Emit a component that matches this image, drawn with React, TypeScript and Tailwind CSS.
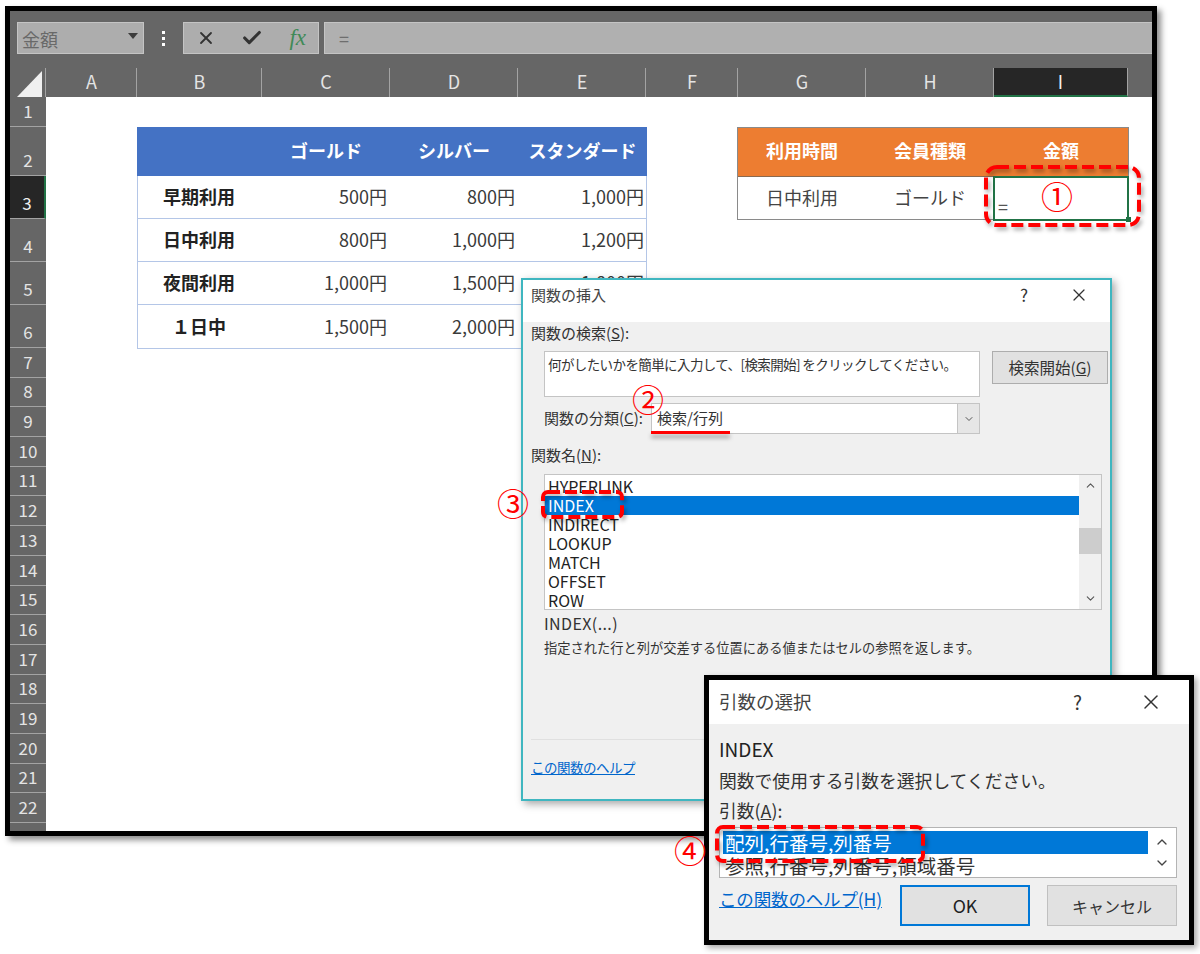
import { Check, ChevronDown, ChevronUp, X } from 'lucide-react';

const font = "font-['Noto_Sans_CJK_JP','Noto_Sans',sans-serif]";

const columns = [
  { name: 'A', width: 'w-[91px]' },
  { name: 'B', width: 'w-[125px]' },
  { name: 'C', width: 'w-[128px]' },
  { name: 'D', width: 'w-[128px]' },
  { name: 'E', width: 'w-[128px]' },
  { name: 'F', width: 'w-[92px]' },
  { name: 'G', width: 'w-[128px]' },
  { name: 'H', width: 'w-[128px]' },
];

const rowHeights: [string, string][] = [
  ['1', 'h-[30px]'],
  ['2', 'h-[49px]'],
  ['3', 'h-[43px]'],
  ['4', 'h-[43px]'],
  ['5', 'h-[43px]'],
  ['6', 'h-[43px]'],
];
const plainRows = ['7', '8', '9', '10', '11', '12', '13', '14', '15', '16', '17', '18', '19', '20', '21', '22'];

const prices = [
  ['早期利用', '500円', '800円', '1,000円'],
  ['日中利用', '800円', '1,000円', '1,200円'],
  ['夜間利用', '1,000円', '1,500円', '1,800円'],
  ['１日中', '1,500円', '2,000円', '2,500円'],
];

const functions = ['HYPERLINK', 'INDEX', 'INDIRECT', 'LOOKUP', 'MATCH', 'OFFSET', 'ROW'];

function RowHead({ label, height, active }: { label: string; height: string; active?: boolean }) {
  return (
    <div
      className={`${height} flex shrink-0 items-end justify-center border-b border-[#a3a3a3] pb-[4px] text-[17px] leading-[22px] ${
        active ? 'border-r-2 border-r-[#217346] bg-[#262626] text-[#f0f0f0]' : 'text-[#e4e4e4]'
      }`}
    >
      {label}
    </div>
  );
}

function Toolbar() {
  return (
    <div className="flex h-[57px] shrink-0 items-start bg-[#666666] pt-[11px] pl-[7px]">
      <div className="flex h-[32px] w-[127px] items-center justify-between border border-[#c4c4c4] bg-[#adadad] pr-[5px] pl-[4px] text-[18px] text-[#696969]">
        <span className="mt-[2px]">金額</span>
        <svg width="10" height="6" viewBox="0 0 10 6" className="mb-1">
          <path d="M0 0h10L5 6z" fill="#3c3c3c" />
        </svg>
      </div>
      <div className="flex w-[39px] justify-center pt-[9px]">
        <div className="flex flex-col gap-[3px]">
          <span className="size-[3px] bg-white" />
          <span className="size-[3px] bg-white" />
          <span className="size-[3px] bg-white" />
        </div>
      </div>
      <div className="flex h-[32px] w-[136px] items-center justify-between border border-[#c4c4c4] bg-[#adadad] pr-[12px] pl-[12px]">
        <X size={20} strokeWidth={2.2} className="text-[#333333]" />
        <Check size={22} strokeWidth={3.4} className="-ml-[2px] text-[#333333]" />
        <span className="font-['Liberation_Serif',serif] text-[23px] text-[#3f8a57] italic">fx</span>
      </div>
      <div className="ml-[5px] flex h-[32px] flex-1 items-center border-t border-b border-l border-[#c4c4c4] bg-[#b0b0b0] pl-[14px] text-[18px] text-[#6e6e6e]">
        =
      </div>
    </div>
  );
}

function ColumnHeader() {
  return (
    <div className="flex h-[29px] shrink-0 bg-[#666666]">
      <div className="flex w-[36px] shrink-0 items-end justify-end border-r border-[#a3a3a3] pr-[2px]">
        <svg width="26" height="26" viewBox="0 0 26 26">
          <path d="M25 0v26H0z" fill="#f0f0f0" />
        </svg>
      </div>
      {columns.map((col) => (
        <div
          key={col.name}
          className={`${col.width} flex shrink-0 items-center justify-center border-r border-[#a3a3a3] pb-[2px] pl-[1px] text-[18px] text-[#e4e4e4]`}
        >
          {col.name}
        </div>
      ))}
      <div className="flex w-[134px] shrink-0 items-center justify-center border-r border-[#a3a3a3] border-b-2 border-b-[#217346] bg-[#262626] pb-[1px] text-[18px] text-[#f0f0f0]">
        I
      </div>
    </div>
  );
}

function PriceTable() {
  return (
    <div className="w-[510px] shrink-0 border-r border-b border-l border-[#b4c6e7] text-[18px] text-[#3a3a3a]">
      <div className="-mx-px grid h-[49px] grid-cols-[125px_128px_128px_129px] items-center bg-[#4472c4] pb-[3px] font-bold text-white">
        <span />
        <span className="text-center">ゴールド</span>
        <span className="text-center">シルバー</span>
        <span className="text-center">スタンダード</span>
      </div>
      {prices.map((row, i) => (
        <div
          key={row[0]}
          className={`grid h-[43px] grid-cols-[125px_128px_128px_128px] items-center pb-[1px] ${
            i < prices.length - 1 ? 'border-b border-[#b4c6e7]' : ''
          }`}
        >
          <span className="pr-[3px] text-center font-bold text-[#222222]">{row[0]}</span>
          <span className="pr-[4px] text-right">{row[1]}</span>
          <span className="pr-[4px] text-right">{row[2]}</span>
          <span className="pr-[3px] text-right">{row[3]}</span>
        </div>
      ))}
    </div>
  );
}

function LookupTable() {
  return (
    <div className="ml-[90px] w-[392px] shrink-0 border border-[#8a8a8a] text-[18px] text-[#444444]">
      <div className="grid h-[49px] grid-cols-[128px_128px_134px] items-center border-b border-[#8a6a50] bg-[#ed7d31] pb-[3px] text-center font-bold text-white">
        <span>利用時間</span>
        <span>会員種類</span>
        <span>金額</span>
      </div>
      <div className="grid h-[42px] grid-cols-[128px_128px_134px] items-center pb-[1px] text-center">
        <span>日中利用</span>
        <span>ゴールド</span>
        <span className="self-end pb-[2px] pl-[4px] text-left text-[18px] leading-[20px] text-[#555555]">=</span>
      </div>
    </div>
  );
}

function InsertFunctionDialog() {
  return (
    <div className="absolute top-[278px] left-[521px] flex h-[523px] w-[591px] flex-col border-2 border-[#3fb6c0] bg-[#f0f0f0] text-[15px] text-[#333333] shadow-[3px_3px_8px_rgba(0,0,0,0.35)]">
      <div className="flex h-[42px] shrink-0 items-start justify-between bg-white pt-[4px] pr-[21px] pl-[8px] leading-[22px]">
        <span className="text-[#444444]">関数の挿入</span>
        <div className="flex items-center gap-[41px]">
          <span className="text-[17px]">?</span>
          <X size={20} strokeWidth={1.5} />
        </div>
      </div>
      <div className="px-[8px]">
        <div className="h-[29px] leading-[22px]">
          関数の検索(<u>S</u>):
        </div>
        <div className="flex items-start">
          <div className="ml-[13px] h-[46px] w-[436px] shrink-0 border border-[#c4c4c4] bg-white pt-[2px] pl-[3px] text-[13.5px] leading-[20px] tracking-[-0.6px] whitespace-nowrap">
            何がしたいかを簡単に入力して、[検索開始] をクリックしてください。
          </div>
          <div className="ml-[12px] flex h-[33px] w-[116px] shrink-0 items-center justify-center border border-[#adadad] bg-[#e1e1e1] text-[15.5px]">
            検索開始(<u>G</u>)
          </div>
        </div>
        <div className="mt-[6px] flex h-[31px] items-center pl-[13px]">
          <span className="w-[107px] whitespace-nowrap">
            関数の分類(<u>C</u>):
          </span>
          <div className="flex h-[31px] w-[329px] items-center justify-between border border-[#c4c4c4] bg-white pl-[5px]">
            検索/行列
            <span className="flex h-full w-[22px] items-center justify-center border-l border-[#c4c4c4] bg-[#e6e6e6]">
              <ChevronDown size={12} className="text-[#555555]" />
            </span>
          </div>
        </div>
        <div className="mt-[7px] h-[33px] leading-[28px]">
          関数名(<u>N</u>):
        </div>
        <div className="ml-[13px] flex h-[136px] w-[558px] border border-[#c4c4c4] bg-white">
          <div className="w-[534px] pt-[2px] text-[16px] leading-[19px] text-[#222222]">
            {functions.map((fn) => (
              <div key={fn} className={`h-[19px] pl-[3px] ${fn === 'INDEX' ? 'bg-[#0078d7] text-white' : ''}`}>
                {fn}
              </div>
            ))}
          </div>
          <div className="flex flex-1 flex-col items-center justify-between bg-[#f0f0f0] py-[4px]">
            <ChevronUp size={13} className="text-[#555555]" />
            <div className="mb-[3px] h-[26px] w-full bg-[#cdcdcd]" />
            <ChevronDown size={13} className="text-[#555555]" />
          </div>
        </div>
        <div className="mt-[2px] ml-[13px] h-[22px] text-[16px] leading-[22px] tracking-[0.4px]">INDEX(...)</div>
        <div className="mt-[4px] ml-[13px] text-[13.25px] leading-[20px] whitespace-nowrap">
          指定された行と列が交差する位置にある値またはセルの参照を返します。
        </div>
        <div className="mt-[81px] h-px bg-[#e0e0e0]" />
        <div className="mt-[17px] w-fit text-[13.5px] leading-[20px] tracking-[-0.5px] text-[#0066cc] underline">
          この関数のヘルプ
        </div>
      </div>
    </div>
  );
}

function ArgumentDialog() {
  return (
    <div className="absolute top-[675px] left-[704px] h-[270px] w-[490px] border-[5px] border-black bg-[#f0f0f0] text-[17.8px] text-[#333333] shadow-[3px_3px_6px_rgba(0,0,0,0.35)]">
      <div className="flex h-[44px] items-center justify-between bg-white pr-[26px] pl-[10px]">
        <span className="text-[18.5px] text-[#444444]">引数の選択</span>
        <div className="flex items-center gap-[57px]">
          <span className="text-[19px]">?</span>
          <X size={24} strokeWidth={1.5} />
        </div>
      </div>
      <div className="px-[10px] pt-[11px]">
        <div className="h-[29px] text-[19px] leading-[28px] text-[#222222]">INDEX</div>
        <div className="h-[32px] leading-[32px] whitespace-nowrap">関数で使用する引数を選択してください。</div>
        <div className="h-[31px] leading-[28px]">
          引数(<u>A</u>):
        </div>
        <div className="flex h-[51px] w-[458px] overflow-hidden border border-[#b4b4b4] bg-white">
          <div className="w-[428px] pt-[3px] pl-[3px] text-[19.5px] whitespace-nowrap">
            <div className="h-[23px] bg-[#0078d7] pl-[2px] leading-[23px] text-white">配列,行番号,列番号</div>
            <div className="h-[24px] pl-[2px] leading-[24px]">参照,行番号,列番号,領域番号</div>
          </div>
          <div className="flex flex-1 flex-col items-center justify-center gap-[5px]">
            <ChevronUp size={16} className="text-[#444444]" />
            <ChevronDown size={16} className="text-[#444444]" />
          </div>
        </div>
        <div className="mt-[7px] flex items-start">
          <div className="w-[181px] text-[17.5px] leading-[27px] tracking-[-0.15px] whitespace-nowrap text-[#0066cc] underline">
            この関数のヘルプ(H)
          </div>
          <div className="flex h-[41px] w-[130px] items-center justify-center border-2 border-[#0078d7] bg-[#e1e1e1] text-[#222222]">
            OK
          </div>
          <div className="ml-[17px] flex h-[41px] w-[130px] items-center justify-center border border-[#c0c0c0] bg-[#e1e1e1] text-[16px]">
            キャンセル
          </div>
        </div>
      </div>
    </div>
  );
}

function DashedBox({ className, w, h, r }: { className: string; w: number; h: number; r: number }) {
  return (
    <svg
      className={`absolute drop-shadow-[2px_3px_2px_rgba(0,0,0,0.35)] ${className}`}
      width={w}
      height={h}
      viewBox={`0 0 ${w} ${h}`}
    >
      <rect
        x="2"
        y="2"
        width={w - 4}
        height={h - 4}
        rx={r}
        fill="none"
        stroke="#ff0000"
        strokeWidth="4"
        strokeDasharray="12 5"
      />
    </svg>
  );
}

function Marker({ className, children }: { className: string; children: string }) {
  return <span className={`absolute text-[32px] leading-none text-[#ff0000] ${className}`}>{children}</span>;
}

export default function App() {
  return (
    <div className={`relative h-[954px] w-[1200px] overflow-hidden bg-white ${font}`}>
      <div className="mt-[6px] ml-[5px] inline-flex h-[830px] w-[1152px] flex-col border-[5px] border-black shadow-[4px_4px_6px_rgba(0,0,0,0.45)]">
        <Toolbar />
        <ColumnHeader />
        <div className="flex min-h-0 flex-1">
          <div className="flex w-[36px] shrink-0 flex-col overflow-hidden bg-[#666666]">
            {rowHeights.map(([label, height]) => (
              <RowHead key={label} label={label} height={height} active={label === '3'} />
            ))}
            {plainRows.map((label) => (
              <RowHead key={label} label={label} height="h-[29.7px]" />
            ))}
          </div>
          <div className="relative flex flex-1 items-start bg-white pt-[30px] pl-[91px]">
            <PriceTable />
            <LookupTable />
            {/* active cell I3 and its fill handle */}
            <div className="absolute top-[79px] left-[947px] h-[45px] w-[136px] border-2 border-[#217346]" />
            <div className="absolute top-[120px] left-[1080px] size-[5px] bg-[#217346]" />
          </div>
        </div>
      </div>

      <InsertFunctionDialog />
      <ArgumentDialog />

      <DashedBox className="top-[165px] left-[984px]" w={157} h={62} r={11} />
      <DashedBox className="top-[490px] left-[541px]" w={83} h={29} r={5} />
      <DashedBox className="top-[825px] left-[715px]" w={210} h={38} r={6} />
      <div className="absolute top-[431px] left-[651px] h-[3px] w-[79px] bg-[#ff0000] shadow-[0_4px_4px_rgba(0,0,0,0.35)]" />

      <Marker className="top-[179px] left-[1041px]">①</Marker>
      <Marker className="top-[382px] left-[632px]">②</Marker>
      <Marker className="top-[486px] left-[497px]">③</Marker>
      <Marker className="top-[833px] left-[674px]">④</Marker>
    </div>
  );
}
